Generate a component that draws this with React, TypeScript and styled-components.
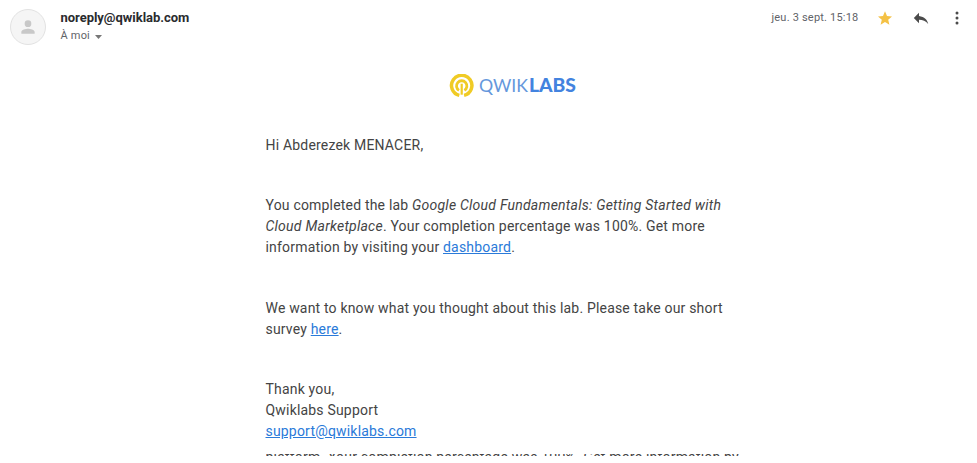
import React from "react";
import styled, { createGlobalStyle } from "styled-components";

const Global = createGlobalStyle`
  * { box-sizing: border-box; }
  body { margin: 0; background: #fff; overflow: hidden; }
`;
const Page = styled.main`
  height: 463px;
  overflow: hidden;
  background: #fff;
  font-family: Roboto, "Liberation Sans", sans-serif;
`;
const Header = styled.header`
  display: flex;
  height: 74px;
  padding: 9px 12px 0 10px;
`;
const Avatar = styled.div`
  display: grid;
  place-items: center;
  width: 36px;
  height: 36px;
  border: 1px solid #e2e2e2;
  border-radius: 50%;
  background: #f5f5f5;
`;
const Sender = styled.div`
  margin-left: 14.5px;
  flex: 1;
`;
const Address = styled.div`
  font-size: 13px;
  font-weight: 700;
  line-height: 18px;
  letter-spacing: -0.03px;
  color: #2a2b2e;
`;
const Recipient = styled.div`
  display: flex;
  align-items: center;
  font-size: 11px;
  line-height: 17px;
  letter-spacing: 0.2px;
  color: #5f6368;
`;
const Caret = styled.svg`
  margin: 2px 0 0 5px;
`;
const Stamp = styled.div`
  width: 105.5px;
  font-size: 11px;
  line-height: 17px;
  letter-spacing: 0.2px;
  color: #5f6368;
`;
const Actions = styled.div`
  display: flex;
  gap: 20px;
  height: 20px;
`;
const Body = styled.article`
  width: 496px;
  margin-left: 265.5px;
`;
const Logo = styled.svg`
  display: block;
  margin-left: 182.5px;
`;
const Text = styled.p<{ $top: number; $track?: number }>`
  margin: ${(p) => p.$top}px 0 0;
  font-size: 14px;
  line-height: 21px;
  letter-spacing: ${(p) => p.$track ?? 0.19}px;
  color: #444;
  white-space: nowrap;
`;
const Title = styled.em`
  letter-spacing: 0.24px;
`;
const Link = styled.a`
  color: #2a7ad9;
  text-decoration: underline;
`;
const Clipped = styled.div`
  height: 2px;
  margin-top: 12px;
  overflow: hidden;
`;

export default function App() {
  return (
    <Page>
      <Global />
      <Header>
        <Avatar>
          <svg width="20" height="20" viewBox="0 0 24 24" fill="#c8c8c8">
            <path d="M12 12a4 4 0 1 0 0-8 4 4 0 0 0 0 8zm0 2c-2.7 0-8 1.3-8 4v2h16v-2c0-2.7-5.3-4-8-4z" />
          </svg>
        </Avatar>
        <Sender>
          <Address>noreply@qwiklab.com</Address>
          <Recipient>
            À moi
            <Caret width="7" height="4"><path d="M0 0h7L3.5 4z" fill="#777" /></Caret>
          </Recipient>
        </Sender>
        <Stamp>jeu. 3 sept. 15:18</Stamp>
        <Actions>
          <svg width="16" height="20" viewBox="0 0 16 20"><path d="M8 2.3l2 4.7 5 .4-3.8 3.3 1.2 5L8 13.1l-4.4 2.6 1.2-5L1 7.4 6 7z" fill="#f4c145" /></svg>
          <svg width="16" height="20" viewBox="0 0 16 20"><path d="M6 7V3.8L.8 9 6 14.2v-3.4c3.8 0 6.8 1.2 9.2 4.2C14.3 10.8 11.5 7.8 6 7z" fill="#4b4b4b" /></svg>
          <svg width="16" height="20" viewBox="0 0 16 20" fill="#4b4b4b"><circle cx="8" cy="4" r="1.5" /><circle cx="8" cy="9" r="1.5" /><circle cx="8" cy="14" r="1.5" /></svg>
        </Actions>
      </Header>
      <Body>
        <Logo width="132" height="24" viewBox="0 0 132 24">
          <path d="M11.3 21.4A10.2 10.2 0 1 1 16.1 21.4" fill="none" stroke="#f0cb25" strokeWidth="3.5" />
          <path d="M11 16.4A5.2 5.2 0 1 1 16.4 16.4" fill="none" stroke="#f0cb25" strokeWidth="2.8" />
          <path d="M13.7 9.7v11" stroke="#f0cb25" strokeWidth="2.2" />
          <text x="31" y="18" fontFamily="Lato" fontSize="18" fill="#6598dc" textLength="49" lengthAdjust="spacingAndGlyphs">QWIK</text>
          <text x="81" y="18" fontFamily="Lato" fontSize="18" fontWeight="900" fill="#4383df" textLength="47" lengthAdjust="spacingAndGlyphs">LABS</text>
        </Logo>
        <Text $top={37}>Hi Abderezek MENACER,</Text>
        <Text $top={39}>
          You completed the lab <Title>Google Cloud Fundamentals: Getting Started with<br />Cloud Marketplace</Title>. Your completion percentage was 100%. Get more<br />
          information by visiting your <Link>dashboard</Link>.
        </Text>
        <Text $top={40} $track={0.18}>
          We want to know what you thought about this lab. Please take our short<br />survey <Link>here</Link>.
        </Text>
        <Text $top={39}>
          Thank you,<br />Qwiklabs Support<br /><Link>support@qwiklabs.com</Link>
        </Text>
        <Clipped>
          <Text $top={-7}>platform. Your completion percentage was 100%. Get more information by</Text>
        </Clipped>
      </Body>
    </Page>
  );
}
